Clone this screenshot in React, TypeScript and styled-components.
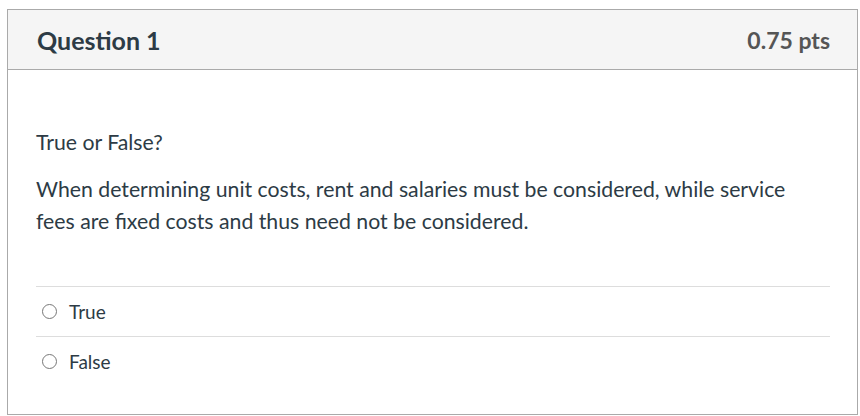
import React from "react";
import styled, { createGlobalStyle } from "styled-components";

const GlobalStyle = createGlobalStyle`
  body {
    margin: 0;
    background: #fff;
    font-family: Lato, "Liberation Sans", sans-serif;
  }
`;

const Page = styled.div`
  padding: 9px 2px 0 7px;
`;

const Card = styled.div`
  border: 1px solid #aaa;
  height: 406px;
  box-sizing: border-box;
  background: #fff;
`;

const Header = styled.div`
  display: flex;
  justify-content: space-between;
  align-items: center;
  height: 60px;
  box-sizing: border-box;
  padding: 1px 27px 0 29px;
  background: #f5f5f5;
  border-bottom: 1px solid #aaa;
`;

const Title = styled.h2`
  margin: 0;
  font-size: 25px;
  font-weight: 700;
  color: #2d3b45;
`;

const Points = styled.span`
  font-size: 23px;
  font-weight: 700;
  color: #555;
`;

const Body = styled.div`
  padding: 56px 27px 0 28px;
`;

const Text = styled.p`
  margin: 0 0 15px;
  max-width: 780px;
  font-size: 21.25px;
  line-height: 32px;
  color: #2d3b45;
`;

const Answers = styled.div`
  margin-top: 49px;
`;

const Answer = styled.label`
  display: flex;
  align-items: center;
  gap: 12px;
  height: 49px;
  padding-left: 6px;
  border-top: 1px solid #ddd;
  font-size: 19px;
  color: #2d3b45;
`;

const Radio = styled.span`
  flex-shrink: 0;
  width: 13px;
  height: 13px;
  border: 1px solid #777;
  border-radius: 50%;
  background: #fff;
`;

export default function App() {
  return (
    <>
      <GlobalStyle />
      <Page>
        <Card>
          <Header>
            <Title>Question 1</Title>
            <Points>0.75 pts</Points>
          </Header>
          <Body>
            <Text>True or False?</Text>
            <Text>
              When determining unit costs, rent and salaries must be considered, while service
              fees are fixed costs and thus need not be considered.
            </Text>
            <Answers>
              {["True", "False"].map((a) => (
                <Answer key={a}>
                  <Radio />
                  {a}
                </Answer>
              ))}
            </Answers>
          </Body>
        </Card>
      </Page>
    </>
  );
}
